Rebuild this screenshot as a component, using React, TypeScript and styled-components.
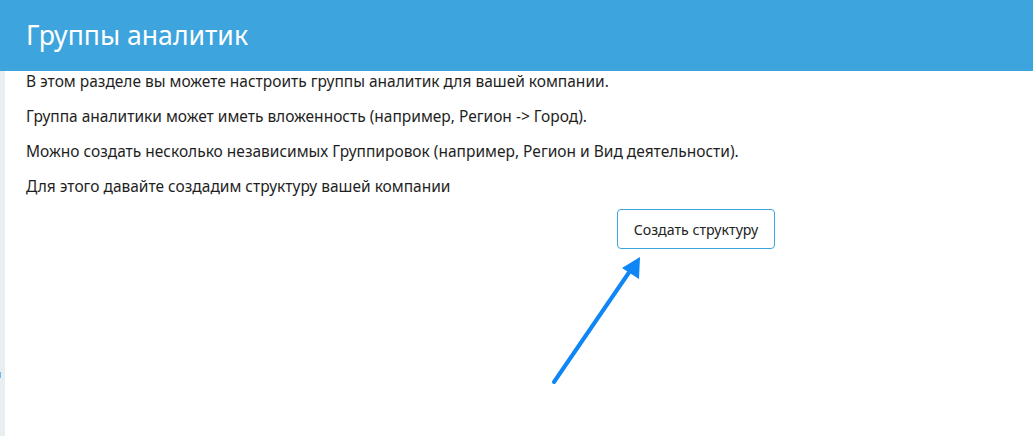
import styled, { createGlobalStyle } from 'styled-components';

const GlobalStyle = createGlobalStyle`
  html, body {
    margin: 0;
    padding: 0;
    background: #ffffff;
  }
  body {
    font-family: 'Noto Sans', 'Liberation Sans', sans-serif;
  }
`;

function App() {
  return (
    <>
      <GlobalStyle />
      <Page>
        <Header>
          <h1>Группы аналитик</h1>
        </Header>
        <Body>
          <SideStrip>
            <span className='marker' />
          </SideStrip>
          <Content>
            <Paragraph>
              В этом разделе вы можете настроить группы аналитик для вашей
              компании.
            </Paragraph>
            <Paragraph>
              Группа аналитики может иметь вложенность (например, Регион -&gt;
              Город).
            </Paragraph>
            <Paragraph>
              Можно создать несколько независимых Группировок (например, Регион
              и Вид деятельности).
            </Paragraph>
            <Paragraph>Для этого давайте создадим структуру вашей компании</Paragraph>
            <ButtonRow>
              <CreateButton type='button'>Создать структуру</CreateButton>
            </ButtonRow>
            <Arrow width='100' height='140' viewBox='0 0 100 140'>
              <line
                x1='6'
                y1='133'
                x2='82'
                y2='22'
                stroke='#0f86f5'
                strokeWidth='4'
                strokeLinecap='round'
              />
              <polygon points='92,8 91,30 74,19' fill='#0f86f5' />
            </Arrow>
          </Content>
        </Body>
      </Page>
    </>
  );
}

export default App;

const Page = styled.div`
  width: 100%;
  height: 436px;
  display: flex;
  flex-direction: column;
  overflow: hidden;
`;

const Header = styled.header`
  height: 71px;
  flex-shrink: 0;
  background-color: #3ea4de;
  display: flex;
  align-items: center;
  padding-left: 26px;
  h1 {
    margin: 0 0 2px;
    font-size: 26.6px;
    font-weight: 400;
    color: #ffffff;
  }
`;

const Body = styled.div`
  flex: 1;
  display: flex;
`;

const SideStrip = styled.div`
  width: 5px;
  background-color: #e9eef3;
  position: relative;
  .marker {
    position: absolute;
    left: 0;
    top: 301px;
    width: 1px;
    height: 6px;
    background: #6cb8f0;
  }
`;

const Content = styled.div`
  flex: 1;
  position: relative;
  padding: 0 0 0 21px;
`;

const Paragraph = styled.p`
  margin: 0 0 15px;
  font-size: 15.5px;
  line-height: 20px;
  color: #1f1f1f;
`;

const ButtonRow = styled.div`
  display: flex;
  padding-left: 591px;
  margin-top: -2px;
`;

const CreateButton = styled.button`
  width: 158px;
  height: 40px;
  background: #ffffff;
  border: 1px solid #3ea4de;
  border-radius: 4px;
  font-family: 'Noto Sans', 'Liberation Sans', sans-serif;
  font-size: 14.2px;
  color: #222222;
  cursor: pointer;
`;

const Arrow = styled.svg`
  position: absolute;
  left: 543px;
  top: 178px;
`;
